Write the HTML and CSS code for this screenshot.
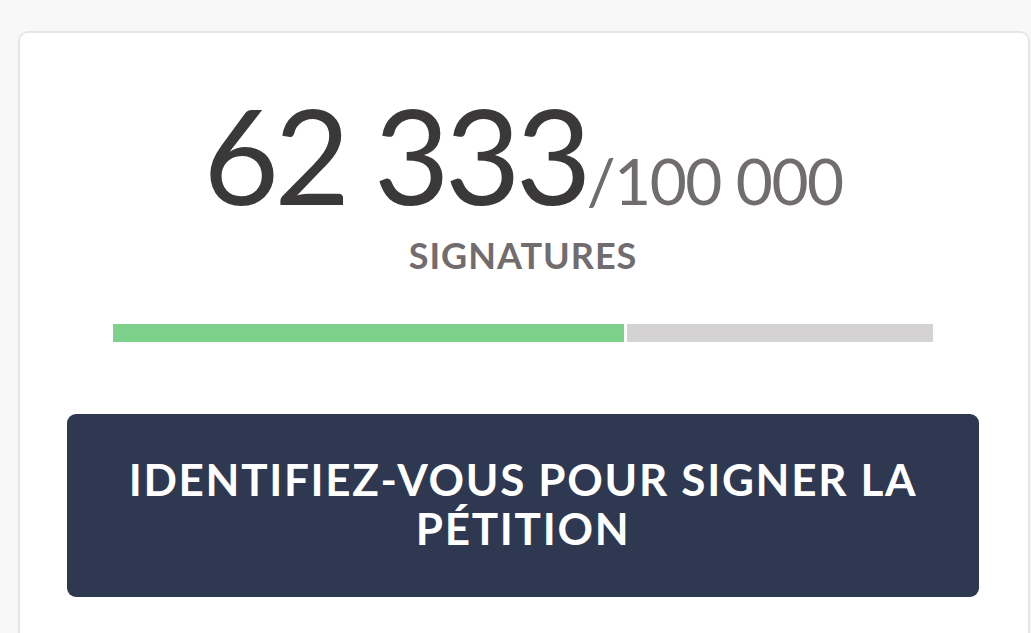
FILE: index.html
```html
<!DOCTYPE html>
<html lang="fr">
<head>
<meta charset="utf-8">
<title>Pétition</title>
<link rel="stylesheet" href="styles.css">
</head>
<body>
<div class="card">
  <div class="count">
    <span class="current">62&nbsp;333</span><span class="goal">/100&nbsp;000</span>
  </div>
  <div class="label">SIGNATURES</div>
  <div class="progress">
    <div class="fill" style="width: 62.333%"></div>
    <div class="rest"></div>
  </div>
  <button class="sign">Identifiez-vous pour signer la pétition</button>
</div>
</body>
</html>
```
FILE: styles.css
```css
html, body {
  margin: 0;
  padding: 0;
  background: #f8f8f8;
  font-family: "Lato", "Open Sans", sans-serif;
}
body {
  padding: 31px 1px 0 18px;
}
.card {
  background: #ffffff;
  border: 2px solid #e6e6e6;
  border-radius: 10px;
  padding: 56px 49px 40px 47px;
  min-height: 700px;
  box-sizing: border-box;
}
.count {
  text-align: center;
  line-height: 1;
  height: 134px;
  white-space: nowrap;
}
.current {
  font-size: 131px;
  color: #3a3839;
  letter-spacing: -5px;
}
.goal {
  font-size: 64px;
  color: #716c6e;
  letter-spacing: -1.5px;
}
.label {
  text-align: center;
  font-size: 36px;
  font-weight: 700;
  color: #716c6e;
  line-height: 40px;
  letter-spacing: 1px;
  margin-top: 12px;
}
.progress {
  display: flex;
  gap: 3px;
  margin: 49px 46px 0;
  height: 18px;
}
.fill {
  background: #7dd18a;
}
.rest {
  flex: 1;
  background: #d4d2d3;
}
.sign {
  display: block;
  width: 100%;
  margin-top: 72px;
  height: 183px;
  border: none;
  border-radius: 9px;
  background: #2e3850;
  color: #ffffff;
  font-family: "Lato", "Open Sans", sans-serif;
  font-size: 44px;
  font-weight: 700;
  text-transform: uppercase;
  letter-spacing: 1.7px;
  line-height: 49px;
  padding: 0 40px 4px;
}
```
